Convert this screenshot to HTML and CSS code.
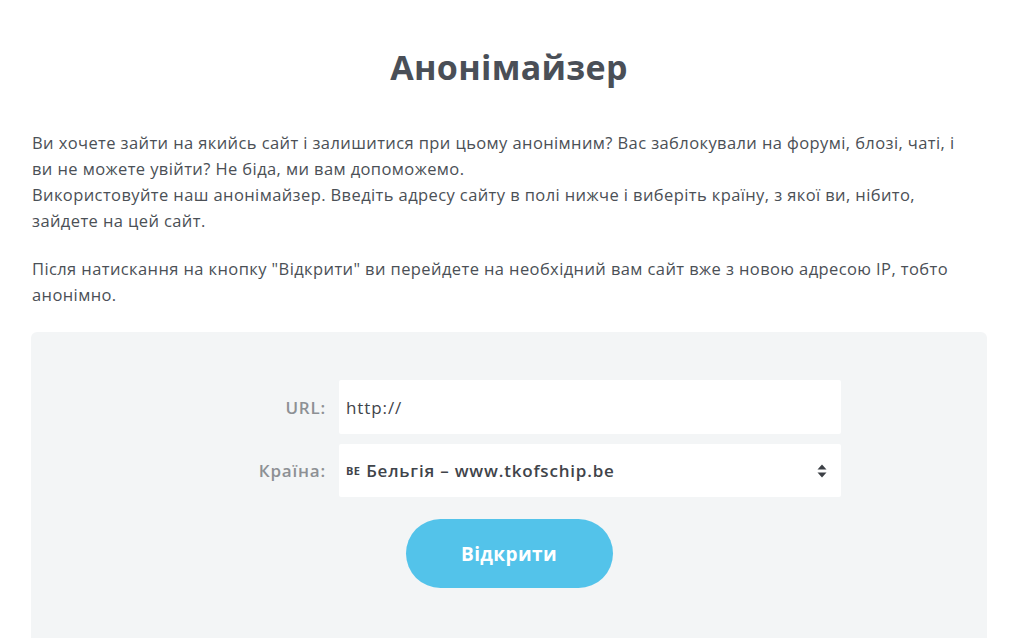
FILE: index.html
```html
<!DOCTYPE html>
<html lang="uk">
<head>
<meta charset="utf-8">
<title>Анонімайзер</title>
<link rel="stylesheet" href="styles.css">
</head>
<body>
<main class="page">
  <h1 class="title">Анонімайзер</h1>
  <div class="intro">
    <p>Ви хочете зайти на якийсь сайт і залишитися при цьому анонімним? Вас заблокували на форумі, блозі, чаті, і ви не можете увійти? Не біда, ми вам допоможемо.<br>Використовуйте наш анонімайзер. Введіть адресу сайту в полі нижче і виберіть країну, з якої ви, нібито, зайдете на цей сайт.</p>
    <p>Після натискання на кнопку "Відкрити" ви перейдете на необхідний вам сайт вже з новою адресою IP, тобто анонімно.</p>
  </div>
  <section class="panel">
    <form class="form">
      <div class="row">
        <label class="label">URL:</label>
        <div class="field url">http://</div>
      </div>
      <div class="row">
        <label class="label">Країна:</label>
        <div class="field select">
          <span class="flag">BE</span><span class="sel-text">Бельгія – www.tkofschip.be</span>
          <svg class="arrows" width="10" height="14" viewBox="0 0 10 14"><path d="M5 0.5 L9.5 5.5 H0.5 Z" fill="#3c4046"/><path d="M5 13.5 L9.5 8.5 H0.5 Z" fill="#3c4046"/></svg>
        </div>
      </div>
      <div class="actions">
        <button type="button" class="btn">Відкрити</button>
      </div>
    </form>
  </section>
</main>
</body>
</html>
```
FILE: styles.css
```css
html, body {
  margin: 0;
  padding: 0;
  background: #ffffff;
}
body {
  font-family: "Open Sans", "Lato", sans-serif;
  color: #4b5056;
}
.page {
  width: 956px;
  margin-left: 31px;
}
.title {
  margin: 0;
  padding-top: 43px;
  height: 71px;
  text-align: center;
  font-family: "Open Sans", sans-serif;
  font-weight: 700;
  font-size: 34px;
  line-height: 48px;
  color: #4a4f57;
  letter-spacing: 0.3px;
}
.intro {
  padding-top: 16px;
  padding-left: 1px;
  padding-right: 17px;
}
.intro p {
  margin: 0 0 22px;
  font-size: 16.5px;
  letter-spacing: 0.4px;
  line-height: 26px;
}
.panel {
  margin-top: 24px;
  background: #f3f5f6;
  border-radius: 6px 6px 0 0;
  height: 306px;
  padding-top: 48px;
  box-sizing: border-box;
}
.row {
  display: grid;
  grid-template-columns: 295px 502px;
  column-gap: 13px;
  align-items: center;
  margin-bottom: 10px;
}
.label {
  text-align: right;
  font-family: "Open Sans", sans-serif;
  font-weight: 600;
  font-size: 17px;
  letter-spacing: 0.8px;
  color: #8d9094;
}
.field {
  background: #ffffff;
  height: 54px;
  border-radius: 2px;
  display: flex;
  align-items: center;
  padding: 0 7px;
  box-sizing: border-box;
  font-family: "Open Sans", sans-serif;
  font-size: 17px;
  color: #3f444a;
}
.url {
  letter-spacing: 0.9px;
}
.select {
  height: 53px;
  padding-left: 7px;
  padding-right: 14px;
}
.flag {
  font-size: 11px;
  font-weight: 700;
  margin-right: 6px;
  letter-spacing: 0.3px;
}
.sel-text {
  flex: 1;
  font-weight: 600;
  letter-spacing: 0.8px;
}
.actions {
  display: flex;
  justify-content: center;
  padding-top: 12px;
}
.btn {
  width: 207px;
  height: 69px;
  border: none;
  border-radius: 35px;
  background: #53c3ea;
  color: #ffffff;
  font-family: "Open Sans", sans-serif;
  font-weight: 700;
  font-size: 19px;
  letter-spacing: 0.4px;
  cursor: pointer;
}
```
